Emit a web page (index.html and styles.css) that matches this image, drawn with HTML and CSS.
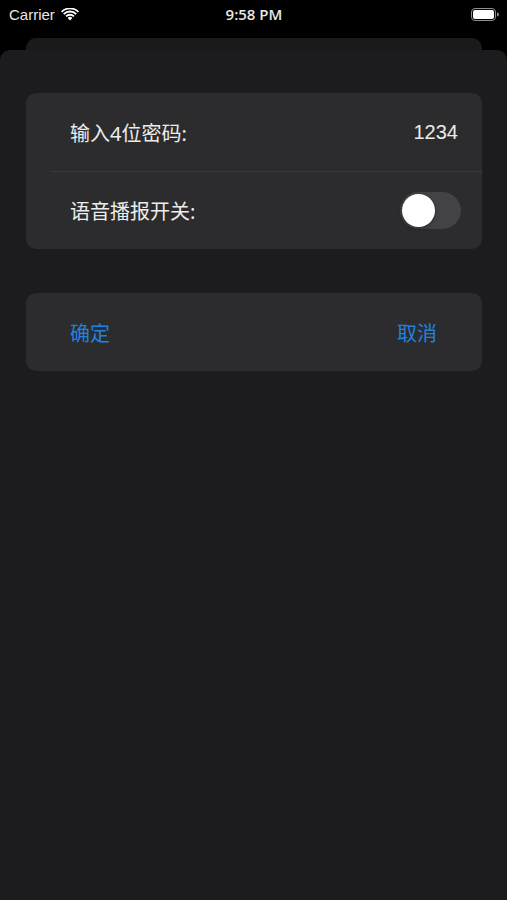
FILE: index.html
```html
<!DOCTYPE html>
<html>
<head>
<meta charset="UTF-8">
<title>设置</title>
<link rel="stylesheet" href="styles.css">
</head>
<body>
	<div class="status_bar">
		<div class="status_left">
			<span>Carrier</span>
			<svg class="wifi" width="18" height="13" viewBox="0 0 18 13">
				<path d="M9 12.5 L6.6 9.9 A3.4 3.4 0 0 1 11.4 9.9 Z" fill="#fff"/>
				<path d="M4.4 7.7 A6.5 6.5 0 0 1 13.6 7.7 L12.3 9 A4.7 4.7 0 0 0 5.7 9 Z" fill="#fff"/>
				<path d="M2.1 5.4 A9.8 9.8 0 0 1 15.9 5.4 L14.6 6.7 A8 8 0 0 0 3.4 6.7 Z" fill="#fff"/>
				<path d="M0 3.2 A12.8 12.8 0 0 1 18 3.2 L16.8 4.4 A11.1 11.1 0 0 0 1.2 4.4 Z" fill="#fff"/>
			</svg>
		</div>
		<div class="status_time">9:58 PM</div>
		<div class="status_right">
			<svg width="28" height="13" viewBox="0 0 28 13">
				<rect x="0.5" y="0.5" width="24" height="12" rx="3.5" fill="none" stroke="#8e8e8e"/>
				<rect x="2" y="2" width="21" height="9" rx="2" fill="#fff"/>
				<path d="M26 4.5 A2 2 0 0 1 26 8.5 Z" fill="#8e8e8e"/>
			</svg>
		</div>
	</div>

	<div class="back_card"></div>

	<div class="sheet">
		<div class="group">
			<div class="row">
				<span class="label">输入4位密码:</span>
				<span class="value">1234</span>
			</div>
			<div class="row">
				<span class="label">语音播报开关:</span>
				<span class="switch"><span class="knob"></span></span>
			</div>
		</div>

		<div class="group buttons">
			<span class="btn">确定</span>
			<span class="btn">取消</span>
		</div>
	</div>
</body>
</html>
```

FILE: styles.css
```css
html, body {
	margin: 0;
	padding: 0;
	background: #000;
	font-family: "Noto Sans", "Noto Sans CJK SC", sans-serif;
	color: #fff;
}

body {
	width: 507px;
	height: 900px;
	overflow: hidden;
	display: flex;
	flex-direction: column;
}

.status_bar {
	height: 28px;
	display: flex;
	align-items: center;
	justify-content: space-between;
	padding: 0 8px 0 9px;
	font-size: 15px;
	font-family: "Liberation Sans", Arial, sans-serif;
}

.status_left {
	width: 120px;
	display: flex;
	align-items: center;
	gap: 6px;
	color: #e8e8e8;
}

.status_time {
	font-family: "Open Sans", sans-serif;
	font-weight: 600;
	font-size: 15px;
	color: #e8e8e8;
}

.status_right {
	width: 120px;
	display: flex;
	justify-content: flex-end;
}

.back_card {
	height: 12px;
	margin: 10px 25px 0 26px;
	background: #1a1a1b;
	border-radius: 10px 10px 0 0;
}

.sheet {
	flex: 1;
	background: #1c1c1e;
	border-radius: 10px 10px 0 0;
	padding: 43px 25px 0 26px;
}

.group {
	background: #2c2c2e;
	border-radius: 10px;
	margin-bottom: 44px;
}

.row {
	height: 78px;
	margin-left: 26px;
	padding: 0 22px 0 18px;
	display: flex;
	align-items: center;
	justify-content: space-between;
	font-size: 20px;
}

.row:first-child {
	padding-right: 24px;
}

.row + .row {
	border-top: 1px solid #3a3a3c;
	height: 77px;
}

.label {
	color: #ececec;
}

.value {
	color: #ececec;
	font-family: "Liberation Sans", Arial, sans-serif;
	font-size: 20px;
}

.switch {
	width: 61px;
	height: 37px;
	border-radius: 19px;
	background: #434345;
	display: flex;
	align-items: center;
	padding-left: 2px;
	box-sizing: border-box;
	margin-right: -1px;
}

.knob {
	width: 33px;
	height: 33px;
	border-radius: 50%;
	background: #fff;
	box-shadow: 0 2px 4px rgba(0, 0, 0, 0.3);
}

.buttons {
	height: 78px;
	display: flex;
	align-items: center;
	justify-content: space-between;
	padding: 0 45px 0 44px;
	font-size: 20px;
}

.btn {
	color: #1f82e0;
}
```
